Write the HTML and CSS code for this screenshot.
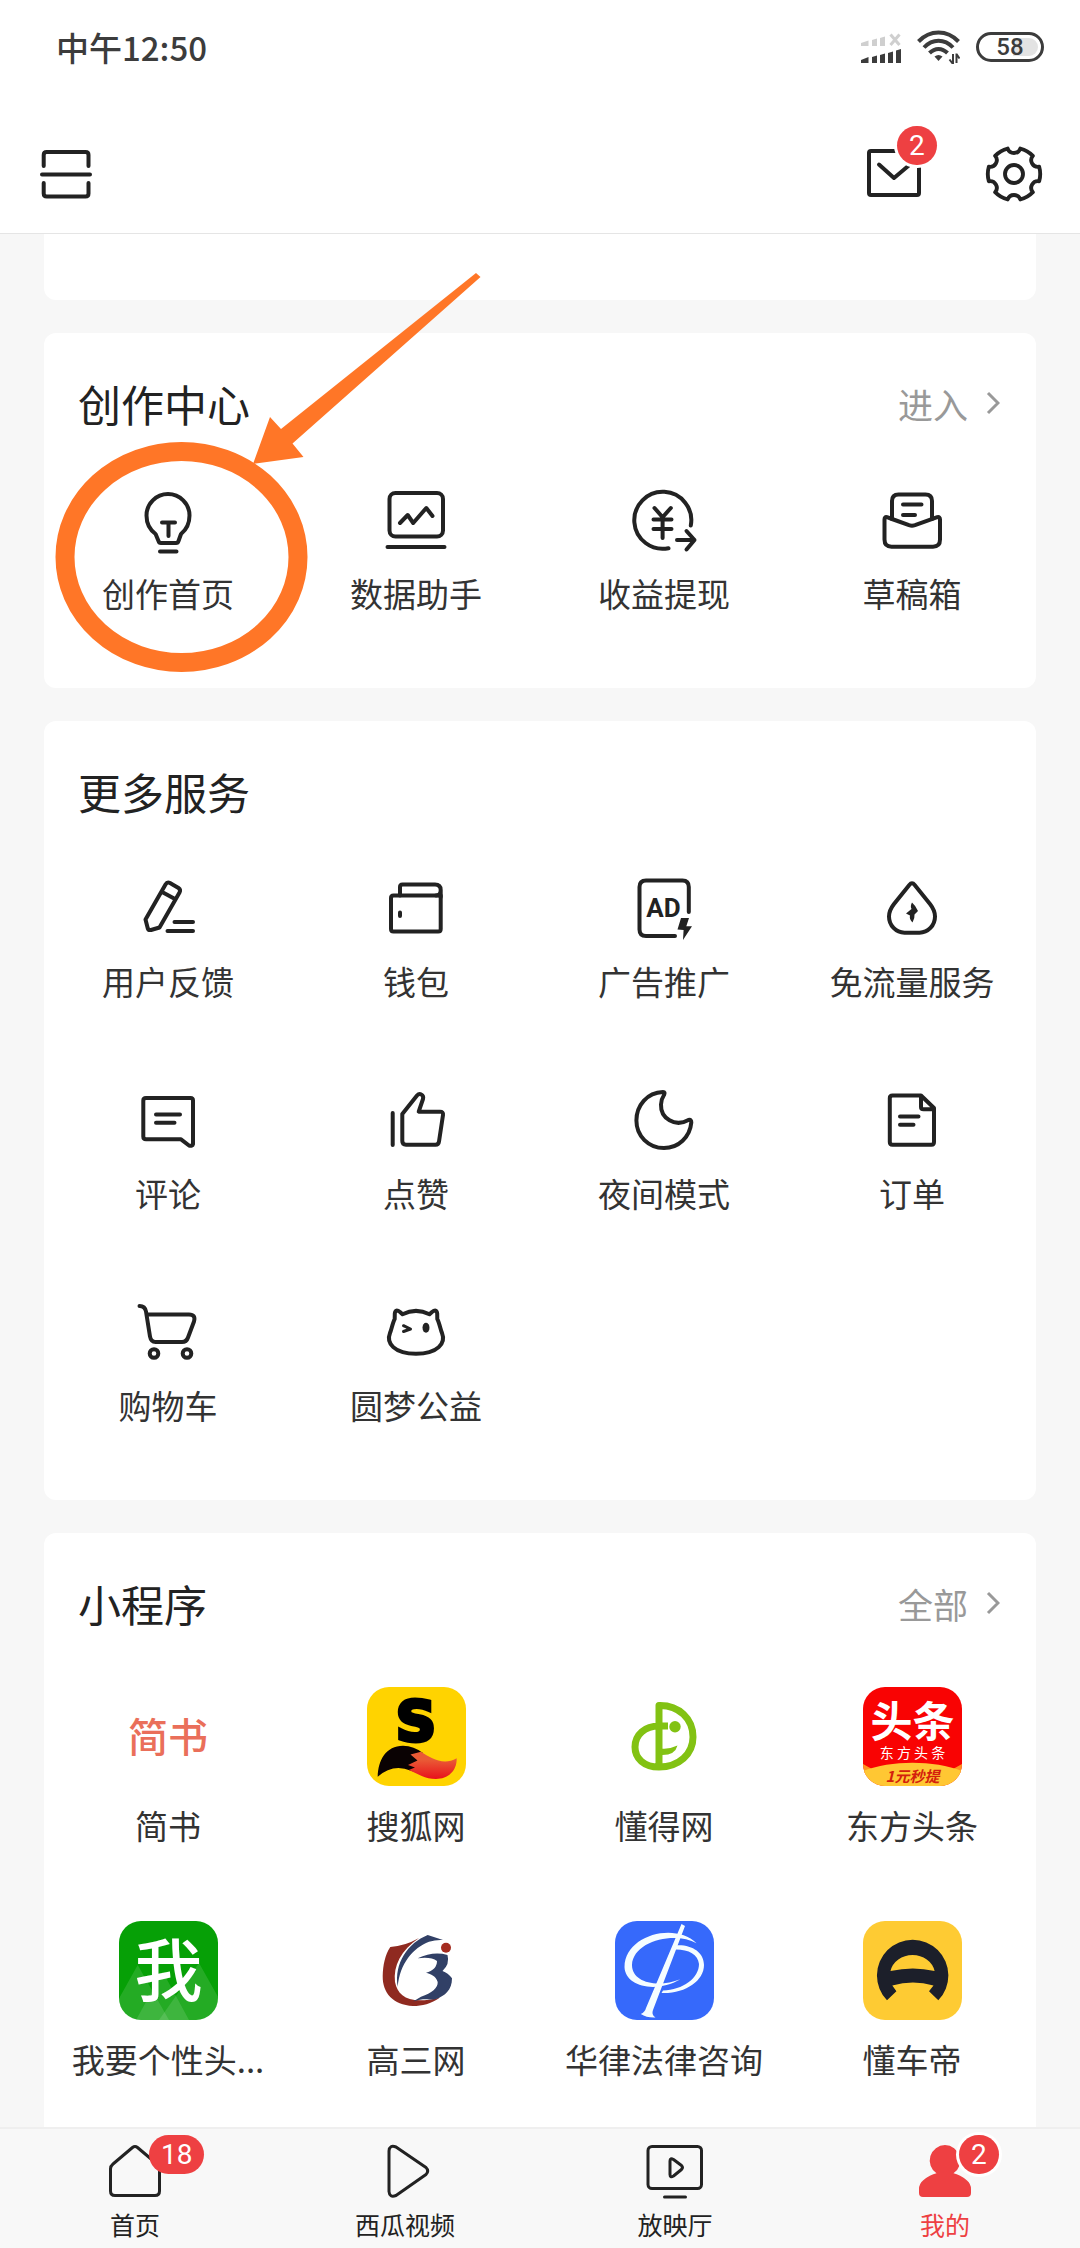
FILE: index.html
```html
<!DOCTYPE html>
<html lang="zh-CN">
<head>
    <meta charset="UTF-8">
    <meta name="viewport" content="width=device-width, initial-scale=1">
    <title>我的</title>
    <link rel="stylesheet" href="styles.css">
</head>
<body>
    <div class="status-bar">
        <span class="time">中午12:50</span>
        <div class="status-icons">
            <svg class="signal" viewBox="0 0 40 32" aria-hidden="true">
                <g fill="#cfcfcf">
                    <path d="M0 12 L7.500 9.500 V15 H0Z"/>
                    <path d="M11 9 L16 7.500 V15 H11Z"/>
                    <path d="M19 7 L24 5.500 V15 H19Z"/>
                </g>
                <path d="M29.500 3.500 L38.500 14 M38.500 3.500 L29.500 14" stroke="#cfcfcf" stroke-width="3"/>
                <g fill="#3c3c3c">
                    <path d="M0 29 L7.500 26 V32 H0Z"/>
                    <path d="M11 26 L16 24.500 V32 H11Z"/>
                    <path d="M19 24 L24 22.500 V32 H19Z"/>
                    <path d="M27 22 L32 20.500 V32 H27Z"/>
                    <path d="M35 19.500 L40 18 V32 H35Z"/>
                </g>
            </svg>
            <svg class="wifi" viewBox="0 0 43 34" aria-hidden="true">
                <g fill="none" stroke="#3c3c3c" stroke-width="4">
                    <path d="M1.500 11.500 C13 -0.500 30 -0.500 41.500 11.500"/>
                    <path d="M7 17.500 C15.500 8.500 27.500 8.500 36 17.500"/>
                    <path d="M12.500 23 C18 17.500 25 17.500 30.500 23"/>
                </g>
                <path d="M17.500 26.500 Q21.500 23.500 25.500 26.500 L21.500 31Z" fill="#3c3c3c"/>
                <path d="M36 24 V34 M36 34 L32.500 29.500 M39.500 33 V23.500 M39.500 24 L42.500 28.500" fill="none" stroke="#3c3c3c" stroke-width="2"/>
            </svg>
            <div class="battery"><span>58</span></div>
        </div>
    </div>

    <header class="top-bar">
        <button type="button" class="icon-btn" aria-label="扫一扫">
            <svg class="icon" viewBox="0 0 60 60">
                <path d="M7.700 22 V11 Q7.700 8 10.700 8 H49.500 Q52.500 8 52.500 11 V22 M6 30.500 H54 M7.700 39 V49.500 Q7.700 52.500 10.700 52.500 H49.500 Q52.500 52.500 52.500 49.500 V39"/>
            </svg>
        </button>
        <div class="top-actions">
            <button type="button" class="icon-btn" aria-label="消息">
                <svg class="icon" viewBox="0 0 60 60">
                    <rect x="5" y="7" width="50" height="44" rx="2"/>
                    <path d="M15 20.500 L30 34 L46 20.500"/>
                </svg>
                <span class="badge badge-ring badge-mail">2</span>
            </button>
            <button type="button" class="icon-btn" aria-label="设置">
                <svg class="icon" viewBox="-31 -31 62 62">
                    <path d="M26 -7.500 A27 27 0 0 1 26 7.500 A6.900 6.900 0 0 0 19.500 18.800 A27 27 0 0 1 6.500 26.300 A6.900 6.900 0 0 0 -6.500 26.300 A27 27 0 0 1 -19.500 18.800 A6.900 6.900 0 0 0 -26 7.500 A27 27 0 0 1 -26 -7.500 A6.900 6.900 0 0 0 -19.500 -18.800 A27 27 0 0 1 -6.500 -26.300 A6.900 6.900 0 0 0 6.500 -26.300 A27 27 0 0 1 19.500 -18.800 A6.900 6.900 0 0 0 26 -7.500Z"/>
                    <circle r="9.300"/>
                </svg>
            </button>
        </div>
    </header>

    <main class="content">
        <div class="card card-tail"></div>

        <section class="card">
            <div class="card-head">
                <h2>创作中心</h2>
                <a class="more" href="#">进入
                    <svg class="chevron" viewBox="0 0 14 24"><path d="M2 2 L12 12 L2 22"/></svg>
                </a>
            </div>
            <div class="grid">
                <a class="item" href="#">
                    <svg class="icon" viewBox="0 0 72 72">
                        <path d="M23.600 49 C17.500 44.500 14.500 38 14.500 30.500 A21.500 21.500 0 0 1 57.500 30.500 C57.500 38 54.500 44.500 49 49 L46.500 56 Q46 58 44 58 H29 Q27 58 26.500 56Z"/>
                        <path d="M28 66.500 H44.500 M30 37.500 H43 M36.500 37.500 V51"/>
                    </svg>
                    <span>创作首页</span>
                </a>
                <a class="item" href="#">
                    <svg class="icon" viewBox="0 0 72 72">
                        <rect x="9.500" y="8" width="53.500" height="43.500" rx="6"/>
                        <path d="M7.500 62 H64.500 M20 38 L27.700 30 L33.200 38 L46.300 23 L52.500 31"/>
                    </svg>
                    <span>数据助手</span>
                </a>
                <a class="item" href="#">
                    <svg class="icon" viewBox="0 0 72 72">
                        <path d="M62.800 40.500 A28.500 28.500 0 1 0 40.500 63.200"/>
                        <path d="M26.500 23 L34.600 32.300 L42.800 23 M34.600 32.300 V53 M25.500 34.500 H43.500 M25.500 44 H43.500"/>
                        <path d="M49 55 H66.500 M58.500 46 L66.500 55 L58.500 64.500"/>
                    </svg>
                    <span>收益提现</span>
                </a>
                <a class="item" href="#">
                    <svg class="icon" viewBox="0 0 72 72">
                        <path d="M16 34 V16 Q16 9.500 22.500 9.500 H49.500 Q56 9.500 56 16 V34"/>
                        <path d="M16 34 L11 32.200 Q8.500 31.500 8.500 34.500 V54.500 Q8.500 61.700 15.500 61.700 H57 Q64 61.700 64 54.500 V34.500 Q64 31.500 61.300 32.200 L39 40.200 Q36 41.200 33 40.200Z"/>
                        <path d="M27 19.500 H45.500 M27 30 H39"/>
                    </svg>
                    <span>草稿箱</span>
                </a>
            </div>

            <!-- hand-drawn hint over the first entry -->
            <svg class="hint" viewBox="0 0 450 415" aria-hidden="true">
                <ellipse cx="137.500" cy="290" rx="116.500" ry="105.500"/>
                <path d="M432 6 L436.500 10 L248.500 176.500 L259.500 190 L209 197 L226 150 L237 162Z"/>
            </svg>
        </section>

        <section class="card">
            <div class="card-head">
                <h2>更多服务</h2>
            </div>
            <div class="grid">
                <a class="item" href="#">
                    <svg class="icon" viewBox="0 0 72 72">
                        <path d="M13.500 46.500 L33.500 11.500 Q35.200 8.500 38 10 L46.500 15 Q49 16.700 47.500 19.500 L27.500 54.500 L19 57 Q16.500 57.500 15.800 55.500Z M31 19.500 L43 26"/>
                        <path d="M42.500 49 H61 M35.500 58 H61"/>
                    </svg>
                    <span>用户反馈</span>
                </a>
                <a class="item" href="#">
                    <svg class="icon" viewBox="0 0 72 72">
                        <path d="M13.500 22.500 H60.700 V56 Q60.700 58.500 58.200 58.500 H13.500 Q11 58.500 11 56 V25 Q11 22.500 13.500 22.500Z"/>
                        <path d="M20 22.500 V14 Q20 11.500 22.500 11.500 H55 Q60.700 11.500 60.700 17 Q60.700 22.500 56 22.500 M60.700 17 V24 M20 39.500 V43"/>
                    </svg>
                    <span>钱包</span>
                </a>
                <a class="item" href="#">
                    <svg class="icon" viewBox="0 0 72 72">
                        <path d="M60.800 39 V14 Q60.800 7.500 54.500 7.500 H18 Q11.500 7.500 11.500 14 V56.500 Q11.500 63 18 63 H47"/>
                        <text class="icon-ad" x="35.500" y="44" text-anchor="middle">AD</text>
                        <path class="solid" d="M53 45 H61 L58.300 53.300 H64 L55 67 L55.600 57 L49.500 56.500Z"/>
                    </svg>
                    <span>广告推广</span>
                </a>
                <a class="item" href="#">
                    <svg class="icon" viewBox="0 0 72 72">
                        <path d="M33.300 12 Q36 8.700 38.700 12 L54 31 C57.500 35.500 59 39.500 59 43.500 C59 52.500 52 59.700 43.500 59.700 H28.500 C20 59.700 13 52.500 13 43.500 C13 39.500 14.500 35.500 18 31Z"/>
                        <path class="solid" d="M36 29.500 Q39.500 32.500 42 38 L38.500 41.500 Q39 45 36.500 49.500 Q33 46 34 42.500 L30 40.500 L35.500 36 Q34 33 36 29.500Z"/>
                    </svg>
                    <span>免流量服务</span>
                </a>
                <a class="item" href="#">
                    <svg class="icon" viewBox="0 0 72 72">
                        <path d="M14 13 H58.500 Q61 13 61 15.500 V59 Q60.500 61.500 57 60.500 L48.700 54.200 H14 Q11.300 54.200 11.300 51.500 V15.500 Q11.300 13 14 13Z"/>
                        <path d="M24 29.500 H48 M24 37.700 H42.500"/>
                    </svg>
                    <span>评论</span>
                </a>
                <a class="item" href="#">
                    <svg class="icon" viewBox="0 0 72 72">
                        <path d="M12.700 28 V60 M22.300 29 L37 10.500 Q39 8.300 41.300 9.500 Q43.800 10.700 43 14 L38.700 26.700 H60 Q63.500 26.700 63 30 L59 56.500 Q58.600 59.700 55.500 59.700 H26 Q22.300 59.700 22.300 56Z"/>
                    </svg>
                    <span>点赞</span>
                </a>
                <a class="item" href="#">
                    <svg class="icon" viewBox="0 0 72 72">
                        <path d="M35 7 C19 7.500 8.400 20.500 8.400 35.500 C8.400 51 20.500 63 36 63 C50.500 63 62 52 63.300 37.500 Q63.500 34 60.500 35 C47 42.500 32.500 33.500 33 19.500 C33 15.500 34 13 36 10 Q37.500 7 35 7Z"/>
                    </svg>
                    <span>夜间模式</span>
                </a>
                <a class="item" href="#">
                    <svg class="icon" viewBox="0 0 72 72">
                        <path d="M16.500 10.500 H45 L58 23 V57 Q58 59.700 55.500 59.700 H16.500 Q13.800 59.700 13.800 57 V13 Q13.800 10.500 16.500 10.500Z M45 10.500 V22 Q45 24.300 47.500 24.300 H58"/>
                        <path d="M24 31.500 H42.500 M24 39.700 H37.500"/>
                    </svg>
                    <span>订单</span>
                </a>
                <a class="item" href="#">
                    <svg class="icon" viewBox="0 0 72 72">
                        <path d="M7.500 9 Q13 9 14 14.500 L18 39.500 Q19 45 23.500 45 H50 Q54.500 45 56 40.500 L62 24.500 Q64 17.500 57 17.500 H14.500"/>
                        <circle cx="22" cy="56.500" r="4.300"/>
                        <circle cx="55" cy="56.500" r="4.300"/>
                    </svg>
                    <span>购物车</span>
                </a>
                <a class="item" href="#">
                    <svg class="icon" viewBox="0 0 72 72">
                        <path d="M22.500 17.300 C31 13 41 13 49.500 17.300 L52 15 Q56.500 11.500 57.200 16.500 L57.300 22 C59.500 26 60.500 33 62 36 C66 46 58 56.700 36 56.700 C14 56.700 6 46 10 36 C11.500 33 12.500 26 14.700 22 L14.800 16.500 Q15.500 11.500 20 15Z"/>
                        <path class="thin" d="M23.500 28.700 L30.500 32 L23.500 34.500"/>
                        <ellipse class="solid" cx="46" cy="30.700" rx="3.500" ry="5"/>
                    </svg>
                    <span>圆梦公益</span>
                </a>
            </div>
        </section>

        <section class="card">
            <div class="card-head">
                <h2>小程序</h2>
                <a class="more" href="#">全部
                    <svg class="chevron" viewBox="0 0 14 24"><path d="M2 2 L12 12 L2 22"/></svg>
                </a>
            </div>
            <div class="grid apps">
                <a class="item" href="#">
                    <div class="app-icon app-jianshu">简书</div>
                    <span>简书</span>
                </a>
                <a class="item" href="#">
                    <svg class="app-icon" viewBox="0 0 99 99">
                        <defs>
                            <linearGradient id="tail" x1="0" y1="0" x2="0" y2="1">
                                <stop offset="0.300" stop-color="#ea5a35"/>
                                <stop offset="1" stop-color="#e8101c"/>
                            </linearGradient>
                        </defs>
                        <rect width="99" height="99" fill="#ffd300"/>
                        <text class="logo-s" x="49" y="53" text-anchor="middle">S</text>
                        <path d="M10.700 89.700 C11 73 19 59 36 58.700 Q47 59 56 66 L56 86 Q50 86 44 83.700 Q26 76 10.700 89.700Z" fill="#0a0203"/>
                        <path d="M54 64.700 C64 71 76 79 89.700 71.300 C90 84 81 92 69 92 C58 92 51 87 41.700 83 L48 80.500 L41 78 L50.500 73.500 L43.500 67.500Z" fill="url(#tail)"/>
                    </svg>
                    <span>搜狐网</span>
                </a>
                <a class="item" href="#">
                    <svg class="app-icon" viewBox="0 0 99 99">
                        <path d="M53 39 H44 C30 39 20 47.500 20 60 C20 71.500 29 80 44 80 C64 80 78 67 78 50 C78 32 64 18 44 18.500 V80" fill="none" stroke="#82c213" stroke-width="7" stroke-linejoin="round"/>
                        <circle cx="60" cy="39.700" r="5.700" fill="#82c213"/>
                        <path d="M46 61.500 Q54 62.500 62.500 58.500 Q60 68.500 46 68Z" fill="#82c213"/>
                    </svg>
                    <span>懂得网</span>
                </a>
                <a class="item" href="#">
                    <svg class="app-icon" viewBox="0 0 99 99">
                        <rect width="99" height="99" fill="#f90303"/>
                        <path d="M0 77 L9 82 L90 82 L99 77 V99 H0Z" fill="#ff9420"/>
                        <path d="M0 84 C28 73 71 73 99 84 V99 H0Z" fill="#ffc733"/>
                        <text class="logo-toutiao" x="49.500" y="50" text-anchor="middle">头条</text>
                        <text class="logo-dongfang" x="49.500" y="71" text-anchor="middle">东 方 头 条</text>
                        <text class="logo-promo" x="49.500" y="95" text-anchor="middle">1元秒提</text>
                    </svg>
                    <span>东方头条</span>
                </a>
                <a class="item" href="#">
                    <svg class="app-icon" viewBox="0 0 99 99">
                        <rect width="99" height="99" fill="#06a006"/>
                        <g fill="#fff" fill-opacity="0.120">
                            <path d="M18.700 44 L50 99 H-12Z"/>
                            <path d="M43.700 50.700 L70 99 H17Z"/>
                            <path d="M80 42 L112 99 H40Z"/>
                        </g>
                        <text class="logo-wo" x="49.500" y="75" text-anchor="middle">我</text>
                    </svg>
                    <span>我要个性头...</span>
                </a>
                <a class="item" href="#">
                    <svg class="app-icon" viewBox="0 0 99 99">
                        <path d="M23.300 26 Q38 25 52 17 C34 29 26 45 28 61 C31 76 43 84 73 76.500 C64 83 55 85 46 85 C26 84 15.500 72 15.700 55 C16 44 18 34 23.300 26Z" fill="#8f2a20"/>
                        <path d="M30.700 65.700 C27 42 41 22 60.700 14 L76 19 Q69 18.500 62 20.700 C46 27 33 42 30.700 65.700Z" fill="#314066"/>
                        <path d="M50.700 37.300 Q66 30 80.500 34 Q83 43 75.500 50 Q81 52 85 57.300 C85 69 78 75 69 78 C64 80 59 76 45.700 80.700 L54 75.700 C65 72 71 67 70.700 61 C69 55 64 53 59 51.700 C66 50 70 46 70 40 Q64 35.500 50.700 37.300Z" fill="#314066"/>
                        <circle cx="79" cy="26.700" r="5" fill="#a52c20"/>
                    </svg>
                    <span>高三网</span>
                </a>
                <a class="item" href="#">
                    <svg class="app-icon" viewBox="0 0 99 99">
                        <rect width="99" height="99" fill="#3669fb"/>
                        <g fill="#f5fdff">
                            <path d="M66.500 3 L70 5 L38 89 Q36 94 40.500 96.500 Q32 97 25.800 93 Q30 91 31 87Z"/>
                            <path d="M81.600 22.300 C60 1 10 14 9.500 46 C10 65 40 73 65.400 58.300 C43 67 17 62 17 44 C18 20 60 10 81.600 22.300Z"/>
                            <path d="M60 24.500 C76 23 89 31 89 44 C89 60 70 73 46.500 72 L48 69.500 C68 69 84 57 84 43 C83 33 73 28 59 28.500Z"/>
                        </g>
                    </svg>
                    <span>华律法律咨询</span>
                </a>
                <a class="item" href="#">
                    <svg class="app-icon" viewBox="0 0 99 99">
                        <rect width="99" height="99" fill="#fecb33"/>
                        <path fill="#1c1f2a" fill-rule="evenodd" d="M24 79.300 A35.700 35.700 0 1 1 75.300 79.300 L66 70.300 L70.500 64.500 Q50 58.500 29.300 64.500 L33.400 70.300Z M27.500 50 Q50 45 71.600 50 A22.500 20 0 0 0 27.500 50Z"/>
                    </svg>
                    <span>懂车帝</span>
                </a>
            </div>
        </section>
    </main>

    <nav class="tab-bar">
        <a class="tab" href="#">
            <div class="tab-icon">
                <svg class="icon" viewBox="0 0 60 60">
                    <path d="M27.500 6.500 Q30 4.500 32.500 6.500 L52 23 Q54.500 25 54.500 28 V50 Q54.500 54.500 50 54.500 H10 Q5.500 54.500 5.500 50 V28 Q5.500 25 8 23Z"/>
                </svg>
                <span class="badge">18</span>
            </div>
            <span>首页</span>
        </a>
        <a class="tab" href="#">
            <div class="tab-icon">
                <svg class="icon" viewBox="0 0 60 60">
                    <path d="M14 10 Q14.500 3.500 21 6 L51 26.500 Q54.500 30 51 33.500 L21 54.500 Q14.500 57 14 50.500Z"/>
                </svg>
            </div>
            <span>西瓜视频</span>
        </a>
        <a class="tab" href="#">
            <div class="tab-icon">
                <svg class="icon" viewBox="0 0 60 60">
                    <rect x="3" y="5.500" width="53.500" height="42" rx="4"/>
                    <path d="M19.500 56 H40.500 M25 20 Q25 16.500 28.500 18.500 L36.500 24.500 Q38.500 26.500 36.500 28.500 L28.500 35 Q25 37 25 33.500Z"/>
                </svg>
            </div>
            <span>放映厅</span>
        </a>
        <a class="tab active" href="#">
            <div class="tab-icon">
                <svg class="icon" viewBox="0 0 60 60">
                    <path class="solid" d="M30 4 A15.500 15.500 0 0 1 38.500 32.300 Q45 33.500 52 39.500 Q56 43 56 48 V52 Q56 56 52 56 H8 Q4 56 4 52 V48 Q4 43 8 39.500 Q15 33.500 21.500 32.300 A15.500 15.500 0 0 1 30 4Z"/>
                </svg>
                <span class="badge badge-ring">2</span>
            </div>
            <span>我的</span>
        </a>
    </nav>
</body>
</html>
```
FILE: styles.css
```css
* {
    box-sizing: border-box;
}

body {
    margin: 0;
    height: 100vh;
    display: flex;
    flex-direction: column;
    background-color: #f7f7f7;
    color: #222;
    font-family: "Noto Sans CJK SC", "Noto Sans", sans-serif;
}

a {
    color: inherit;
    text-decoration: none;
}

.icon {
    display: block;
    overflow: visible;
    fill: none;
    stroke: #222;
    stroke-width: 4;
    stroke-linecap: round;
    stroke-linejoin: round;
}

.icon .solid {
    fill: #222;
    stroke: none;
}

.icon .thin {
    stroke-width: 3;
}

.icon-ad {
    fill: #222;
    stroke: none;
    font-family: Roboto, sans-serif;
    font-size: 26px;
    font-weight: bold;
}

/* status bar */
.status-bar {
    display: flex;
    justify-content: space-between;
    align-items: center;
    height: 94px;
    padding: 0 36px 0 56px;
    background-color: #fff;
}

.time {
    color: #3c3c3c;
    font-size: 33px;
    font-weight: 500;
}

.status-icons {
    display: flex;
    align-items: center;
    gap: 16px;
}

.signal {
    width: 40px;
    height: 32px;
}

.wifi {
    width: 43px;
    height: 34px;
}

.battery {
    display: flex;
    align-items: center;
    justify-content: center;
    width: 68px;
    height: 30px;
    padding: 3px;
    border: 3px solid #3c3c3c;
    border-radius: 15px;
    background: linear-gradient(to right, #fff 55%, #e3e3e3 55%) content-box;
    color: #3c3c3c;
    font-family: Roboto, sans-serif;
    font-size: 24px;
    font-weight: 500;
    line-height: 24px;
}

/* header */
.top-bar {
    display: flex;
    justify-content: space-between;
    align-items: center;
    height: 140px;
    padding: 20px 36px 0;
    background-color: #fff;
    border-bottom: 1px solid #e5e5e5;
}

.top-actions {
    display: flex;
    gap: 60px;
}

.icon-btn {
    position: relative;
    width: 60px;
    height: 60px;
    padding: 0;
    border: none;
    background: none;
}

.badge {
    position: absolute;
    left: 44px;
    top: -6px;
    min-width: 39px;
    height: 39px;
    padding: 0 12px;
    border-radius: 20px;
    background-color: #ee4042;
    color: #fff;
    font-family: Roboto, sans-serif;
    font-size: 28px;
    line-height: 39px;
    text-align: center;
}

.badge-ring {
    box-shadow: 0 0 0 3px #fff;
}

.badge-mail {
    left: 33px;
    top: -18px;
}

/* cards */
.content {
    flex: 1;
    min-height: 0;
    overflow-y: auto;
    scrollbar-width: none;
    padding: 0 44px;
}

.card {
    position: relative;
    margin-bottom: 33px;
    border-radius: 12px;
    background-color: #fff;
}

.card-tail {
    height: 66px;
    border-radius: 0 0 12px 12px;
}

.card-head {
    display: flex;
    justify-content: space-between;
    align-items: center;
    height: 140px;
    padding: 0 36px 0 34px;
}

.card-head h2 {
    margin: 0;
    font-size: 43px;
    font-weight: normal;
}

.more {
    display: flex;
    align-items: center;
    gap: 18px;
    color: #999;
    font-size: 35px;
}

.chevron {
    width: 14px;
    height: 24px;
    fill: none;
    stroke: #999;
    stroke-width: 3;
}

.grid {
    display: grid;
    grid-template-columns: repeat(4, minmax(0, 1fr));
    row-gap: 82px;
    padding: 12px 0 73px;
}

.item {
    display: flex;
    flex-direction: column;
    align-items: center;
    gap: 14px;
    color: #333;
    font-size: 33px;
    line-height: 44px;
    white-space: nowrap;
}

.item .icon {
    width: 72px;
    height: 72px;
}

.hint {
    position: absolute;
    left: 0;
    top: -66px;
    width: 450px;
    height: 415px;
    pointer-events: none;
}

.hint ellipse {
    fill: none;
    stroke: #ff7627;
    stroke-width: 19;
}

.hint path {
    fill: #ff7627;
}

/* mini apps */
.apps {
    row-gap: 74px;
    padding-top: 14px;
}

.apps .item {
    gap: 17px;
}

.app-icon {
    width: 99px;
    height: 99px;
    border-radius: 22px;
}

.app-jianshu {
    color: #ea6f5a;
    font-size: 40px;
    font-weight: 500;
    line-height: 96px;
    text-align: center;
}

.logo-s {
    font-family: "DejaVu Sans", sans-serif;
    font-size: 56px;
    font-weight: bold;
    stroke: #000;
    stroke-width: 4;
}

.logo-toutiao {
    fill: #fff;
    font-size: 42px;
    font-weight: bold;
}

.logo-dongfang {
    fill: #fff;
    font-size: 14px;
}

.logo-promo {
    fill: #d4200c;
    font-size: 15px;
    font-style: italic;
    font-weight: bold;
}

.logo-wo {
    fill: #fff;
    font-size: 68px;
    font-weight: 500;
}

/* bottom tabs */
.tab-bar {
    display: flex;
    height: 121px;
    border-top: 2px solid #efefef;
    background-color: #f8f8f8;
}

.tab {
    flex: 1;
    display: flex;
    flex-direction: column;
    align-items: center;
    padding-top: 12px;
    gap: 6px;
    font-size: 25px;
    line-height: 34px;
}

.tab-icon {
    position: relative;
    width: 60px;
    height: 60px;
}

.tab .icon {
    stroke-width: 3;
}

.tab.active {
    color: #ee4042;
}

.tab.active .solid {
    fill: #ee4042;
}
```
